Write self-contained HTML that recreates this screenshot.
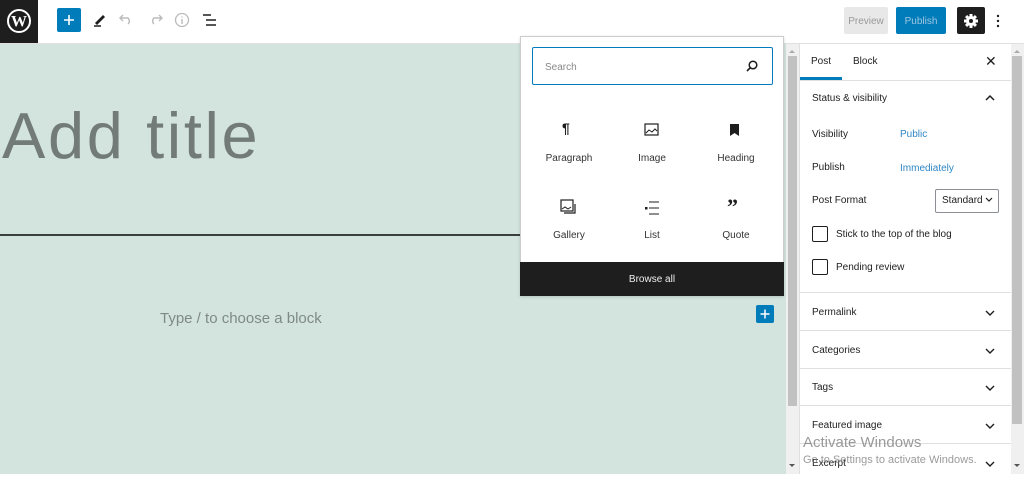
<!DOCTYPE html>
<html><head><meta charset="utf-8"><style>
*{box-sizing:border-box;margin:0;padding:0}
body{width:1024px;height:481px;overflow:hidden;background:#fff;font-family:"Liberation Sans",sans-serif;position:relative;color:#1e1e1e}
.a{position:absolute}
.t{font-size:10px}
</style></head><body>
<div class="a" style="left:0;top:0;width:38px;height:43px;background:#1e1e1e"></div>
<svg class="a" style="left:4px;top:6px" width="30" height="30" viewBox="0 0 30 30"><circle cx="15" cy="15" r="11" fill="none" stroke="#fff" stroke-width="2"/><text x="15" y="20.5" font-family="Liberation Serif" font-weight="bold" font-size="16" fill="#fff" text-anchor="middle">W</text></svg>
<div class="a" style="left:57px;top:8px;width:24px;height:24px;background:#007cba;border-radius:2px"></div>
<svg class="a" style="left:57px;top:8px" width="24" height="24"><path d="M12 7v10M7 12h10" stroke="#fff" stroke-width="1.6"/></svg>
<svg class="a" style="left:91px;top:10px" width="18" height="18"><path d="M4 13L12 5l2 2-8 8z" fill="#1e1e1e"/><path d="M3 16h7" stroke="#1e1e1e" stroke-width="1.5"/></svg>
<svg class="a" style="left:118px;top:12px" width="18" height="14"><path d="M5 3L2 6l3 3M2 6h8a4 4 0 0 1 0 6" fill="none" stroke="#bbb" stroke-width="1.4"/></svg>
<svg class="a" style="left:146px;top:12px" width="18" height="14"><path d="M13 3l3 3-3 3M16 6H8a4 4 0 0 0 0 6" fill="none" stroke="#bbb" stroke-width="1.4"/></svg>
<svg class="a" style="left:173px;top:11px" width="18" height="18"><circle cx="9" cy="9" r="6.5" fill="none" stroke="#bbb" stroke-width="1.3"/><path d="M9 8v5M9 5.5v1" stroke="#bbb" stroke-width="1.4"/></svg>
<svg class="a" style="left:201px;top:12px" width="18" height="16"><path d="M2 3h8M5 8h10M5 13h10" stroke="#1e1e1e" stroke-width="1.5"/></svg>
<div class="a" style="left:844px;top:7px;width:44px;height:27px;background:#e8e8e8;border-radius:2px;color:#999;font-size:10px;line-height:29px;text-align:center">Preview</div>
<div class="a" style="left:896px;top:7px;width:50px;height:27px;background:#007cba;border-radius:2px;color:#9fc6e0;font-size:10px;line-height:29px;text-align:center">Publish</div>
<div class="a" style="left:957px;top:7px;width:28px;height:27px;background:#1e1e1e;border-radius:2px"></div>
<svg class="a" style="left:962px;top:12px" width="18" height="18" viewBox="0 0 18 18"><g fill="#fff"><circle cx="9" cy="9" r="5"/><rect x="7.5" y="2" width="3" height="14"/><rect x="2" y="7.5" width="14" height="3"/><rect x="7.5" y="2" width="3" height="14" transform="rotate(45 9 9)"/><rect x="7.5" y="2" width="3" height="14" transform="rotate(-45 9 9)"/></g><circle cx="9" cy="9" r="2" fill="#1e1e1e"/></svg>
<svg class="a" style="left:994px;top:12px" width="8" height="18"><circle cx="4" cy="4" r="1.2" fill="#1e1e1e"/><circle cx="4" cy="9" r="1.2" fill="#1e1e1e"/><circle cx="4" cy="14" r="1.2" fill="#1e1e1e"/></svg>
<div class="a" style="left:0;top:43px;width:1024px;height:1px;background:#e0e0e0"></div>
<div class="a" style="left:0;top:44px;width:786px;height:430px;background:#d3e4de"></div>
<div class="a" style="left:2px;top:98px;font-size:65px;color:#727b77;letter-spacing:2.6px">Add title</div>
<div class="a" style="left:0;top:234px;width:520px;height:2px;background:#3a3f3d"></div>
<div class="a" style="left:160px;top:310px;font-size:15px;color:#7f8a86">Type / to choose a block</div>
<div class="a" style="left:756px;top:305px;width:18px;height:18px;background:#007cba;border-radius:2px"></div>
<svg class="a" style="left:756px;top:305px" width="18" height="18"><path d="M9 4.5v9M4.5 9h9" stroke="#fff" stroke-width="1.5"/></svg>
<div class="a" style="left:786px;top:44px;width:13px;height:430px;background:#f0f0f0"></div>
<div class="a" style="left:788px;top:56px;width:9px;height:350px;background:#c1c1c1"></div>
<div class="a" style="left:789px;top:464px;border:3px solid transparent;border-top:3px solid #555"></div>
<div class="a" style="left:789px;top:47px;border:3px solid transparent;border-bottom:3px solid #aaa"></div>
<div class="a" style="left:520px;top:36px;width:264px;height:260px;background:#fff;border:1px solid #ccc;box-shadow:0 1px 3px rgba(0,0,0,.15)"></div>
<div class="a" style="left:532px;top:47px;width:241px;height:38px;border:1.5px solid #007cba;border-radius:2px"></div>
<div class="a t" style="left:545px;top:62px;color:#888">Search</div>
<svg class="a" style="left:745px;top:59px" width="14" height="14"><circle cx="8" cy="6" r="3.8" fill="none" stroke="#1e1e1e" stroke-width="1.5"/><path d="M5.3 8.7L2 12" stroke="#1e1e1e" stroke-width="1.6"/></svg>
<div class="a" style="left:520px;top:262px;width:264px;height:34px;background:#1e1e1e;color:#eee;font-size:10px;line-height:36px;text-align:center">Browse all</div>
<div class="a t" style="left:529px;top:153px;width:80px;text-align:center;color:#333">Paragraph</div>
<div class="a t" style="left:612px;top:153px;width:80px;text-align:center;color:#333">Image</div>
<div class="a t" style="left:696px;top:153px;width:80px;text-align:center;color:#333">Heading</div>
<div class="a t" style="left:529px;top:230px;width:80px;text-align:center;color:#333">Gallery</div>
<div class="a t" style="left:612px;top:230px;width:80px;text-align:center;color:#333">List</div>
<div class="a t" style="left:696px;top:230px;width:80px;text-align:center;color:#333">Quote</div>
<div class="a" style="left:562px;top:120px;font-size:14px;font-weight:bold">¶</div>
<svg class="a" style="left:644px;top:123px" width="16" height="14"><rect x="1" y="1" width="13" height="11" fill="none" stroke="#1e1e1e" stroke-width="1.2"/><path d="M2 10l3-3 3 2 3-3 2 2" fill="none" stroke="#1e1e1e"/></svg>
<svg class="a" style="left:729px;top:123px" width="12" height="14"><path d="M1 1h9v12l-4.5-3L1 13z" fill="#1e1e1e"/></svg>
<svg class="a" style="left:560px;top:199px" width="18" height="18"><rect x="1" y="1" width="12" height="11" fill="none" stroke="#1e1e1e" stroke-width="1.2"/><path d="M2 10l3-2 3 2 3-2" fill="none" stroke="#1e1e1e"/><path d="M15 5v9H4" fill="none" stroke="#1e1e1e" stroke-width="1.2"/></svg>
<svg class="a" style="left:644px;top:200px" width="16" height="16"><path d="M5 2h10M5 8h10M5 14h10" stroke="#1e1e1e" stroke-width="1.1"/><rect x="1" y="7" width="2.5" height="2.5" fill="#1e1e1e"/></svg>
<div class="a" style="left:727px;top:194px;font-size:22px;font-weight:bold;font-family:'Liberation Serif',serif">”</div>
<div class="a" style="left:799px;top:44px;width:212px;height:430px;border-left:1px solid #e0e0e0;background:#fff"></div>
<div class="a" style="left:811px;top:56px;font-size:10px">Post</div>
<div class="a" style="left:853px;top:56px;font-size:10px">Block</div>
<div class="a" style="left:985px;top:53px;font-size:14px">✕</div>
<div class="a" style="left:800px;top:77px;width:42px;height:3px;background:#007cba"></div>
<div class="a" style="left:800px;top:80px;width:211px;height:1px;background:#e0e0e0"></div>
<div class="a" style="left:812px;top:93px;font-size:10px">Status &amp; visibility</div>
<svg class="a" style="left:984px;top:94px" width="12" height="8"><path d="M2 6l4-4 4 4" fill="none" stroke="#1e1e1e" stroke-width="1.5"/></svg>
<div class="a t" style="left:812px;top:129px">Visibility</div>
<div class="a t" style="left:900px;top:129px;color:#2f86c4">Public</div>
<div class="a t" style="left:812px;top:162px">Publish</div>
<div class="a t" style="left:900px;top:163px;color:#2f86c4">Immediately</div>
<div class="a t" style="left:812px;top:195px">Post Format</div>
<div class="a" style="left:935px;top:189px;width:64px;height:24px;border:1px solid #8c8f94;border-radius:2px;font-size:10px;line-height:22px;padding-left:6px">Standard</div>
<svg class="a" style="left:985px;top:197px" width="8" height="6"><path d="M1 1l3 3 3-3" fill="none" stroke="#1e1e1e" stroke-width="1.2"/></svg>
<div class="a" style="left:812px;top:226px;width:16px;height:16px;border:1px solid #1e1e1e;border-radius:2px"></div>
<div class="a t" style="left:836px;top:229px">Stick to the top of the blog</div>
<div class="a" style="left:812px;top:259px;width:16px;height:16px;border:1px solid #1e1e1e;border-radius:2px"></div>
<div class="a t" style="left:836px;top:262px">Pending review</div>
<div class="a" style="left:800px;top:292px;width:211px;height:1px;background:#e0e0e0"></div>
<div class="a t" style="left:812px;top:307px">Permalink</div>
<div class="a" style="left:800px;top:330px;width:211px;height:1px;background:#e0e0e0"></div>
<div class="a t" style="left:812px;top:345px">Categories</div>
<div class="a" style="left:800px;top:368px;width:211px;height:1px;background:#e0e0e0"></div>
<div class="a t" style="left:812px;top:382px">Tags</div>
<div class="a" style="left:800px;top:405px;width:211px;height:1px;background:#e0e0e0"></div>
<div class="a t" style="left:812px;top:420px">Featured image</div>
<div class="a" style="left:800px;top:443px;width:211px;height:1px;background:#e0e0e0"></div>
<div class="a t" style="left:812px;top:458px">Excerpt</div>
<svg class="a" style="left:984px;top:309px" width="12" height="8"><path d="M2 2l4 4 4-4" fill="none" stroke="#1e1e1e" stroke-width="1.4"/></svg>
<svg class="a" style="left:984px;top:347px" width="12" height="8"><path d="M2 2l4 4 4-4" fill="none" stroke="#1e1e1e" stroke-width="1.4"/></svg>
<svg class="a" style="left:984px;top:384px" width="12" height="8"><path d="M2 2l4 4 4-4" fill="none" stroke="#1e1e1e" stroke-width="1.4"/></svg>
<svg class="a" style="left:984px;top:422px" width="12" height="8"><path d="M2 2l4 4 4-4" fill="none" stroke="#1e1e1e" stroke-width="1.4"/></svg>
<svg class="a" style="left:984px;top:460px" width="12" height="8"><path d="M2 2l4 4 4-4" fill="none" stroke="#1e1e1e" stroke-width="1.4"/></svg>
<div class="a" style="left:1011px;top:44px;width:13px;height:430px;background:#f0f0f0"></div>
<div class="a" style="left:1012px;top:56px;width:10px;height:368px;background:#c1c1c1"></div>
<div class="a" style="left:1014px;top:464px;border:3px solid transparent;border-top:3px solid #555"></div>
<div class="a" style="left:1014px;top:47px;border:3px solid transparent;border-bottom:3px solid #aaa"></div>
<div class="a" style="left:803px;top:434px;font-size:15px;color:rgba(120,120,120,.75)">Activate Windows</div>
<div class="a" style="left:803px;top:454px;font-size:11px;color:rgba(120,120,120,.75)">Go to Settings to activate Windows.</div>
<div class="a" style="left:0;top:474px;width:1024px;height:7px;background:#fff"></div>
</body></html>
